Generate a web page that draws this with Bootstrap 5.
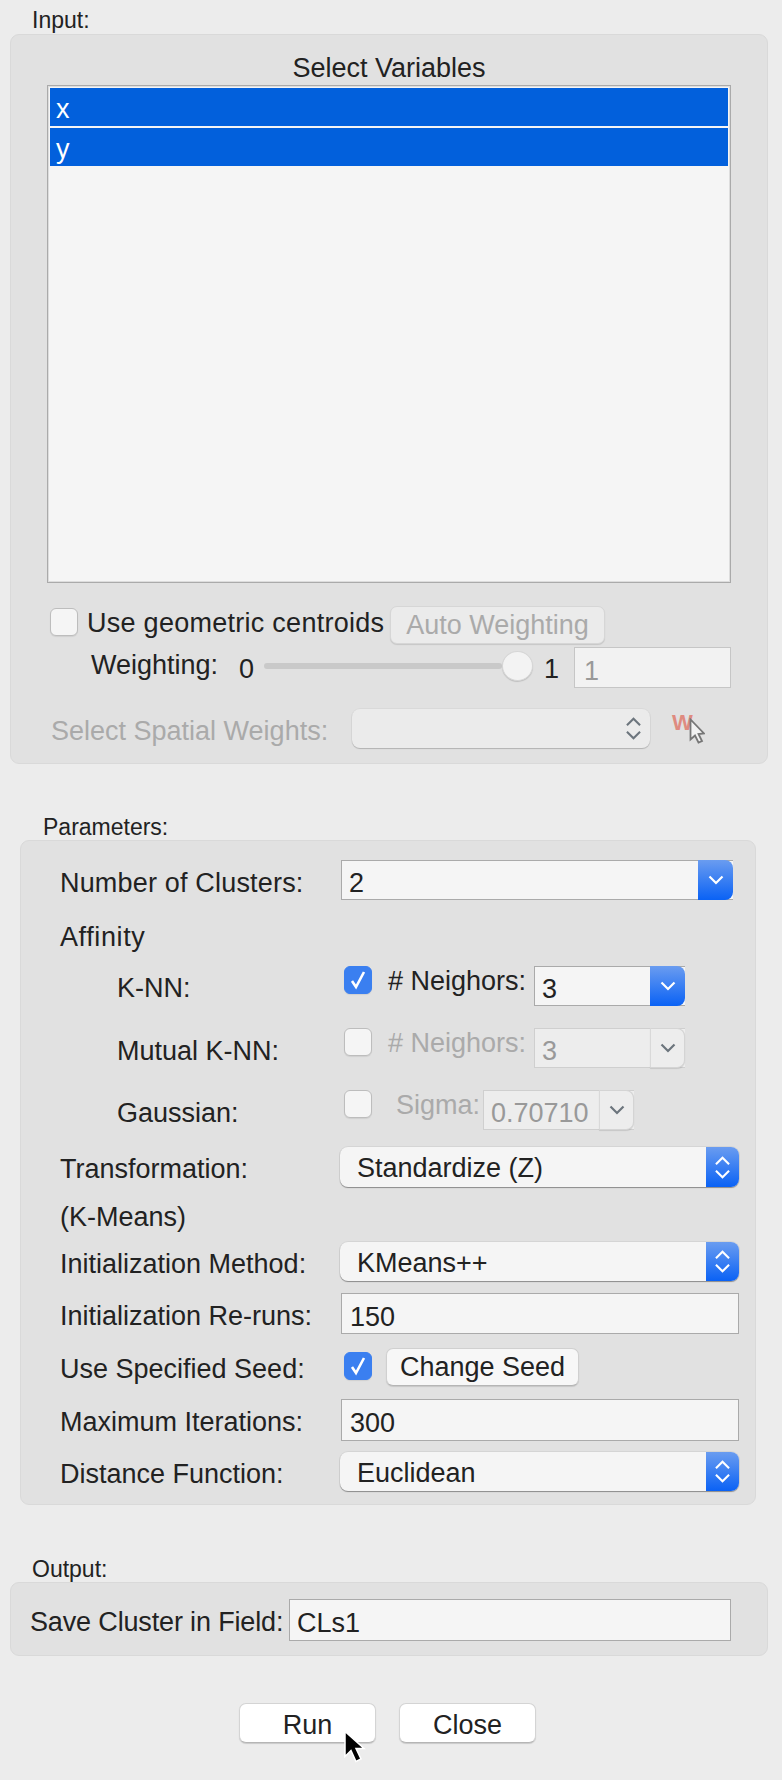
<!DOCTYPE html>
<html lang="en">
<head>
<meta charset="utf-8">
<title>Spectral Clustering Settings</title>
<link rel="stylesheet" href="https://cdn.jsdelivr.net/npm/bootstrap@5.3.0/dist/css/bootstrap.min.css">
<style>
html,body{margin:0;background:#ececec;}
body{width:782px;height:1780px;overflow:hidden;font-family:"Liberation Sans",Arial,sans-serif;font-size:27px;line-height:30px;color:#222;position:relative;}
.cap{font-size:23px;line-height:26px;height:26px;white-space:nowrap;}
.cap-input{margin:7px 0 1px 32px;}
.cap-param{margin:50px 0 0 43px;}
.cap-output{margin:51px 0 0 32px;}
.pane{background:#e1e1e1;border:1px solid #d9d9d9;border-radius:9px;}
.pane-input{margin:0 14px 0 10px;width:758px;height:730px;padding:18px 36px 0;}
.pane-param{margin:0 26px 0 20px;width:736px;height:665px;padding:19px 0 0 39px;}
.pane-output{margin:0 14px 0 10px;width:758px;height:74px;padding:16px 0 0 19px;}
.rowx{display:flex;align-items:center;white-space:nowrap;}
.title-v{text-align:center;height:30px;margin-bottom:2px;}
.lbox{height:498px;background:#f5f5f5;border:1px solid #aaa;padding:2px;box-shadow:inset 0 0 0 1px #ddd;}
.lopt{height:38px;margin-bottom:2px;background:#0260dc;color:#fff;padding:4px 0 0 6px;line-height:34px;}
.chk{width:28px;height:28px;flex:none;border-radius:6px;background:#f5f5f5;border:1px solid #bdbdbd;box-shadow:0 1px 1px rgba(0,0,0,.08);display:flex;align-items:center;justify-content:center;align-self:flex-start;}
.chk-on{background:#3a7ff0;border-color:#3a7ff0;}
.psh{height:38px;border-radius:7px;background:#f5f5f5;border:1px solid #d0d0d0;border-bottom-color:#b5b5b5;box-shadow:0 1px 1px rgba(0,0,0,.12);font-size:27px;line-height:36px;padding:0;color:#222;}
.psh:disabled{color:#aaa;background:#ebebeb;border-color:#d6d6d6;opacity:1;}
.dimt{color:#aaa;}
.fld{height:41px;background:#f5f5f5;border:1px solid #aaa;border-radius:0;font-size:27px;line-height:30px;padding:7px 0 0 8px;color:#222;box-shadow:none;}
.fld:disabled{background:#f2f2f2;color:#999;border-color:#c6c6c6;opacity:1;}
.cmb{height:40px;display:flex;background:#f5f5f5;border:1px solid #aaa;border-right:0;}
.cmb-txt{flex:1;padding:7px 0 0 7px;overflow:hidden;}
.cmb-btn{display:flex;align-items:center;justify-content:center;flex:none;border-radius:0 8px 8px 0;background:linear-gradient(#6a9cf0,#0a62f5);margin:-1px 0;width:35px;}
.cmb-dim{border-color:#cfcfcf;color:#999;background:#ededed;border-right:0;}
.cmb-dim .cmb-btn{background:#ededed;border:1px solid #d4d4d4;border-left:1px solid #d9d9d9;box-shadow:0 1px 1px rgba(0,0,0,.12);}
.pop{height:39px;display:flex;background:#f5f5f5;border-radius:8px;box-shadow:0 1px 1px rgba(0,0,0,.35),0 0 0 1px rgba(0,0,0,.05);}
.pop-txt{flex:1;padding:4px 0 0 17px;line-height:35px;}
.pop-btn{width:33px;flex:none;border-radius:0 8px 8px 0;background:linear-gradient(#6a9cf0,#0a62f5);display:flex;align-items:center;justify-content:center;}
.pop-dim{background:#ebebeb;box-shadow:0 1px 1px rgba(0,0,0,.18),0 0 0 1px rgba(0,0,0,.03);}
.pop-dim .pop-btn{background:none;}
.r-geo{height:38px;margin-top:23px;padding-left:3px;}
.r-geo .chk{margin-top:2px;}
.l-geo{margin-left:9px;width:303px;margin-top:-5px;letter-spacing:.27px;}
.btn-auto{width:215px;}
.r-wt{height:41px;margin-top:3px;}
.l-wt{margin-left:44px;width:148px;margin-top:-5px;}
.zero{width:25px;margin-top:2px;}
.trk{width:238px;height:6px;border-radius:3px;background:#c9c9c9;margin-top:-4px;}
.thumb{width:31px;height:30px;border-radius:50%;background:#f3f3f3;border:1px solid #d6d6d6;box-shadow:0 1px 1px rgba(0,0,0,.15);margin-left:0;margin-top:-4px;flex:none;}
.one{width:41px;padding-left:11px;margin-top:2px;}
.f-wt{width:157px;padding-left:9px;}
.r-sp{height:39px;margin-top:21px;}
.l-sp{margin-left:4px;width:301px;padding-top:4px;}
.pop-sp{width:298px;}
.w-ico{margin-left:22px;position:relative;width:34px;height:30px;margin-top:-4px;font-weight:700;font-size:22px;line-height:22px;color:#df8b80;}
.w-cur{position:absolute;left:17px;top:6px;}
.l-main{width:281px;padding-top:4px;}
.l-num{padding-top:6px;letter-spacing:.18px;}
.l-sub{width:284px;padding-left:57px;margin-top:4px;}
.r-mut .l-sub,.r-gau .l-sub{margin-top:6px;}
.c-num{width:392px;}
.r-aff{height:30px;margin-top:22px;letter-spacing:.6px;}
.r-nn{height:40px;}
.r-knn{margin-top:14px;}
.r-mut,.r-gau{margin-top:22px;}
.nbr{margin-left:16px;width:146px;margin-top:-10px;}
.sig{margin-left:24px;width:87px;margin-top:-10px;}
.c-nn{width:151px;}
.r-tr{height:40px;margin-top:17px;}
.pop-wide{width:399px;margin-left:-1px;}
.pop-tr{height:40px;}
.r-km{height:30px;margin-top:15px;}
.r-in{height:39px;margin-top:10px;}
.r-re{height:41px;margin-top:12px;}
.fld-wide{width:398px;}
.r-se{height:38px;margin-top:14px;}
.r-se .chk{margin:4px 0 0 3px;}
.btn-seed{width:193px;margin-left:14px;background:#f7f7f7;}
.r-mx{height:42px;margin-top:13px;}
.r-mx .fld-wide{height:42px;}
.r-di{height:39px;margin-top:11px;}
.l-out{width:259px;letter-spacing:-.15px;padding-top:3px;}
.f-out{width:442px;height:42px;padding-left:7px;}
.foot{margin-top:47px;margin-left:239px;gap:23px;}
.btn-foot{width:137px;height:40px;border-radius:7px;background:#fff;border:1px solid #d4d4d4;border-bottom-color:#b5b5b5;box-shadow:0 1px 1px rgba(0,0,0,.15);font-size:27px;line-height:36px;padding:3px 0 0;color:#222;}
.arrow{position:absolute;left:343px;top:1730px;}
</style>
</head>
<body>
<svg width="0" height="0" class="d-block" aria-hidden="true">
  <symbol id="dn" viewBox="0 0 16 10"><path d="M1.500 1.500l6.500 6.500 6.500-6.500" fill="none" stroke="currentColor" stroke-width="2.2"/></symbol>
  <symbol id="ud" viewBox="0 0 16 28"><path d="M1 10.500l7-7 7 7M1 17.500l7 7 7-7" fill="none" stroke="currentColor" stroke-width="2.2"/></symbol>
  <symbol id="ck" viewBox="0 0 16 20"><path d="M2 11l4 6 8-15" fill="none" stroke="currentColor" stroke-width="2.6"/></symbol>
</svg>

<div class="cap cap-input">Input:</div>
<section class="pane pane-input">
  <div class="title-v">Select Variables</div>
  <div class="lbox">
    <div class="lopt">x</div>
    <div class="lopt">y</div>
  </div>
  <div class="rowx r-geo">
    <span class="chk"></span>
    <span class="l-geo">Use geometric centroids</span>
    <button class="btn psh btn-auto" disabled>Auto Weighting</button>
  </div>
  <div class="rowx r-wt">
    <span class="l-wt">Weighting:</span>
    <span class="zero">0</span>
    <span class="trk"></span>
    <span class="thumb"></span>
    <span class="one">1</span>
    <input class="form-control fld f-wt" value="1" disabled>
  </div>
  <div class="rowx r-sp">
    <span class="l-sp dimt">Select Spatial Weights:</span>
    <div class="pop pop-dim pop-sp"><span class="pop-txt"></span><span class="pop-btn text-secondary"><svg width="15" height="27"><use href="#ud"/></svg></span></div>
    <span class="w-ico">W<svg class="w-cur" width="16" height="26" viewBox="0 0 16 26"><path d="M1.5 1.5v20l4.500-4 3.500 7 3.500-1.500-3.500-7 5.500-.5z" fill="#f2f2f2" stroke="#777" stroke-width="1.800"/></svg></span>
  </div>
</section>

<div class="cap cap-param">Parameters:</div>
<section class="pane pane-param">
  <div class="rowx">
    <span class="l-main l-num">Number of Clusters:</span>
    <div class="cmb c-num"><span class="cmb-txt">2</span><span class="cmb-btn text-white"><svg width="16" height="10"><use href="#dn"/></svg></span></div>
  </div>
  <div class="rowx r-aff">Affinity</div>
  <div class="rowx r-nn r-knn">
    <span class="l-sub">K-NN:</span>
    <span class="chk chk-on text-white"><svg width="16" height="20"><use href="#ck"/></svg></span>
    <span class="nbr"># Neighors:</span>
    <div class="cmb c-nn"><span class="cmb-txt">3</span><span class="cmb-btn text-white"><svg width="16" height="10"><use href="#dn"/></svg></span></div>
  </div>
  <div class="rowx r-nn r-mut">
    <span class="l-sub">Mutual K-NN:</span>
    <span class="chk"></span>
    <span class="nbr dimt"># Neighors:</span>
    <div class="cmb cmb-dim c-nn"><span class="cmb-txt">3</span><span class="cmb-btn text-secondary"><svg width="16" height="10"><use href="#dn"/></svg></span></div>
  </div>
  <div class="rowx r-nn r-gau">
    <span class="l-sub">Gaussian:</span>
    <span class="chk"></span>
    <span class="sig dimt">Sigma:</span>
    <div class="cmb cmb-dim c-nn"><span class="cmb-txt">0.70710</span><span class="cmb-btn text-secondary"><svg width="16" height="10"><use href="#dn"/></svg></span></div>
  </div>
  <div class="rowx r-tr">
    <span class="l-main">Transformation:</span>
    <div class="pop pop-wide pop-tr"><span class="pop-txt">Standardize (Z)</span><span class="pop-btn text-white"><svg width="15" height="27"><use href="#ud"/></svg></span></div>
  </div>
  <div class="rowx r-km">(K-Means)</div>
  <div class="rowx r-in">
    <span class="l-main">Initialization Method:</span>
    <div class="pop pop-wide"><span class="pop-txt">KMeans++</span><span class="pop-btn text-white"><svg width="15" height="27"><use href="#ud"/></svg></span></div>
  </div>
  <div class="rowx r-re">
    <span class="l-main">Initialization Re-runs:</span>
    <input class="form-control fld fld-wide" value="150">
  </div>
  <div class="rowx r-se">
    <span class="l-main">Use Specified Seed:</span>
    <span class="chk chk-on text-white"><svg width="16" height="20"><use href="#ck"/></svg></span>
    <button class="btn psh btn-seed">Change Seed</button>
  </div>
  <div class="rowx r-mx">
    <span class="l-main">Maximum Iterations:</span>
    <input class="form-control fld fld-wide" value="300">
  </div>
  <div class="rowx r-di">
    <span class="l-main">Distance Function:</span>
    <div class="pop pop-wide"><span class="pop-txt">Euclidean</span><span class="pop-btn text-white"><svg width="15" height="27"><use href="#ud"/></svg></span></div>
  </div>
</section>

<div class="cap cap-output">Output:</div>
<section class="pane pane-output">
  <div class="rowx">
    <span class="l-out">Save Cluster in Field:</span>
    <input class="form-control fld f-out" value="CLs1">
  </div>
</section>

<div class="d-flex foot">
  <button class="btn btn-foot">Run</button>
  <button class="btn btn-foot">Close</button>
</div>
<svg class="arrow" width="24" height="34" viewBox="0 0 24 34"><path d="M2 1.500v25l6-6 5 11 5-2.500-5-10.500h8z" fill="#000" stroke="#fff" stroke-width="1.500"/></svg>
<script src="https://cdn.jsdelivr.net/npm/bootstrap@5.3.0/dist/js/bootstrap.bundle.min.js"></script>
</body>
</html>
